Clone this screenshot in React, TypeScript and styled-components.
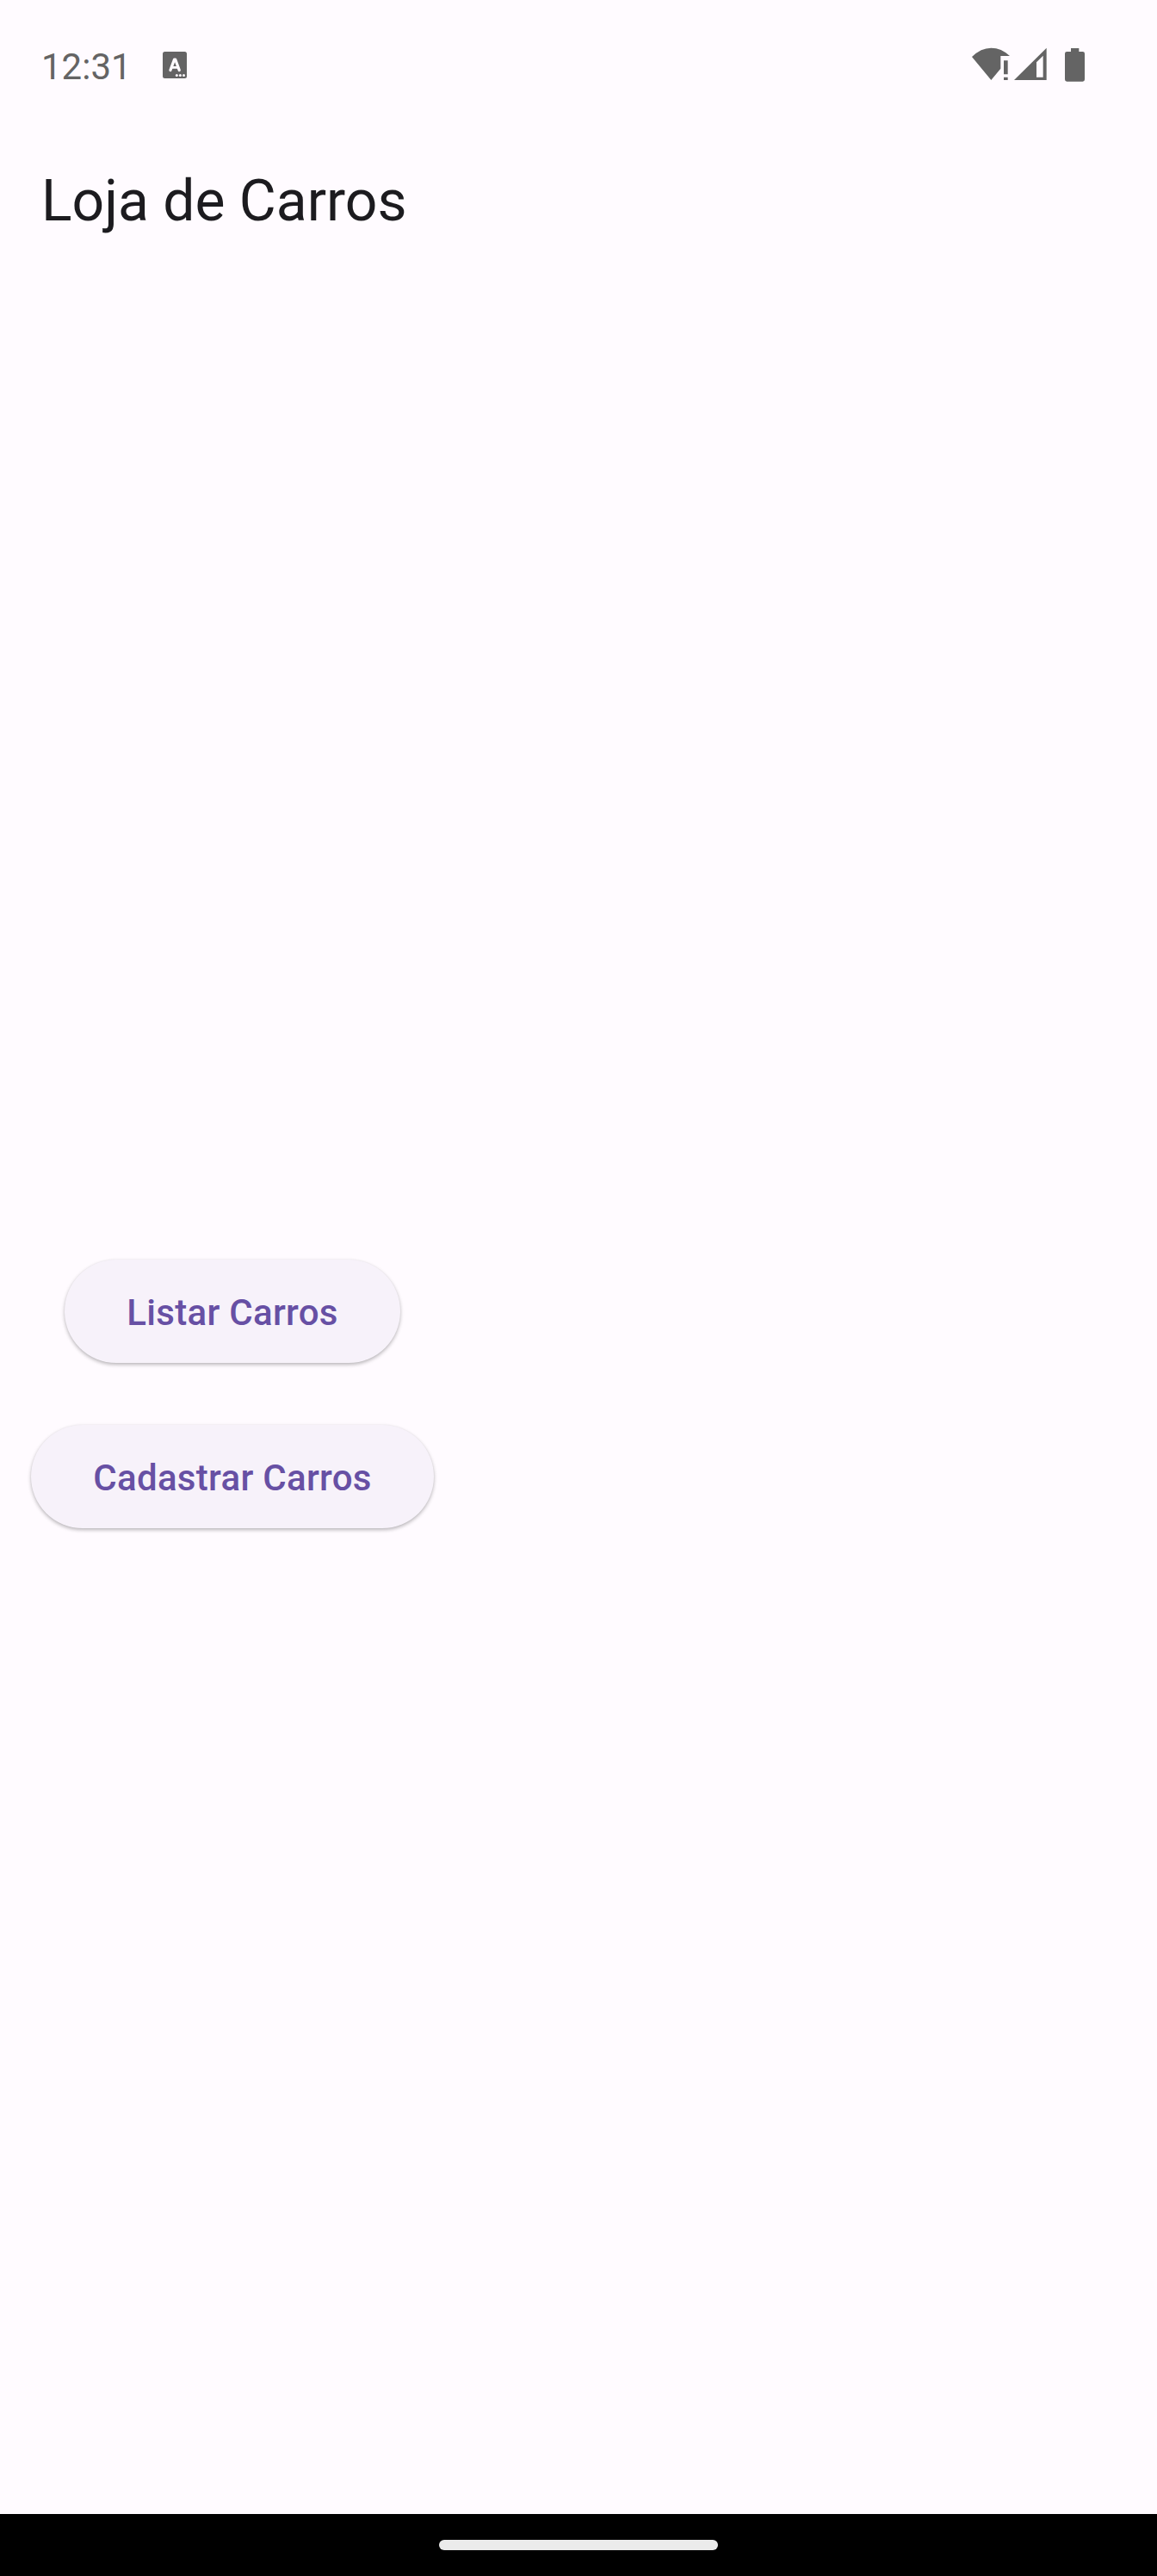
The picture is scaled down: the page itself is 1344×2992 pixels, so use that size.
import React from "react";
import styled, { createGlobalStyle } from "styled-components";

const GlobalStyle = createGlobalStyle`
  html, body { margin: 0; padding: 0; background: #fffbff; }
  *, *::before, *::after { box-sizing: border-box; }
`;

const Screen = styled.div`
  display: flex;
  flex-direction: column;
  width: 1344px;
  height: 2992px;
  background: #fffbff;
  font-family: Roboto, "Noto Sans", sans-serif;
  overflow: hidden;
`;

const StatusBar = styled.header`
  display: flex;
  align-items: flex-start;
  justify-content: space-between;
  height: 152px;
  padding: 53px 84px 0 48px;
  color: #646464;
`;

const StatusGroup = styled.div<{ $gap: number }>`
  display: flex;
  align-items: flex-start;
  gap: ${({ $gap }) => $gap}px;
`;

const Clock = styled.span`
  width: 105px;
  font-size: 42px;
  line-height: 50px;
  white-space: nowrap;
`;

const Glyph = styled.svg<{ $top: number }>`
  display: block;
  flex: none;
  margin-top: ${({ $top }) => $top}px;
  fill: currentColor;
`;

const AppBar = styled.div`
  display: flex;
  align-items: center;
  height: 160px;
  padding: 4px 48px 0;
`;

const Title = styled.h1`
  margin: 0;
  font-size: 66px;
  font-weight: 400;
  line-height: 84px;
  color: #1c1b1f;
  white-space: nowrap;
`;

const Body = styled.main`
  flex: 1;
  display: flex;
  flex-direction: column;
  justify-content: center;
  align-items: flex-start;
  padding: 6px 36px 0;
`;

const Actions = styled.div`
  display: flex;
  flex-direction: column;
  align-items: center;
  gap: 72px;
`;

const ElevatedButton = styled.button<{ $width: number }>`
  display: flex;
  align-items: center;
  justify-content: center;
  width: ${({ $width }) => $width}px;
  height: 120px;
  padding: 3px 0 0;
  border: 0;
  border-radius: 60px;
  background: #f7f2fa;
  color: #6750a4;
  font: 500 42px/60px Roboto, "Noto Sans", sans-serif;
  letter-spacing: 0.3px;
  white-space: nowrap;
  box-shadow: 0 2px 4px rgba(0, 0, 0, 0.28), 0 0 2px rgba(0, 0, 0, 0.04);
`;

const NavigationBar = styled.footer`
  display: flex;
  align-items: center;
  justify-content: center;
  height: 72px;
  background: #000;
`;

const Handle = styled.div`
  width: 324px;
  height: 12px;
  border-radius: 6px;
  background: #ebebeb;
`;

const KeyboardIcon = () => (
  <Glyph $top={7} width="28" height="31" viewBox="0 0 28 31">
    <rect width="28" height="31" rx="2.5" />
    <g fill="none" stroke="#fffbff" strokeLinecap="round" strokeLinejoin="round">
      <path d="M8.9 21.6 13.5 9.1H14.7L19.3 21.6" strokeWidth="3.2" />
      <path d="M10.6 18.4H17.6" strokeWidth="2.6" />
    </g>
    <g fill="#fffbff">
      <circle cx="16.3" cy="27.4" r="1.5" />
      <circle cx="20.4" cy="27.4" r="1.5" />
      <circle cx="24.5" cy="27.4" r="1.5" />
    </g>
  </Glyph>
);

const WifiIcon = () => (
  <Glyph $top={2} width="44" height="38" viewBox="57 45 132 114">
    <path d="M57 78Q88 47 124 47Q160 47 189 75H157V119L124 159Z" />
    <path d="M168 91H182V139H168ZM168 149H182V159H168Z" />
  </Glyph>
);

const SignalIcon = () => (
  <Glyph $top={2} width="38" height="38" viewBox="204 45 114 114">
    <path fillRule="evenodd" d="M204 159 317 47V159ZM282 97V149H305V74Z" />
  </Glyph>
);

const BatteryIcon = () => (
  <Glyph $top={3} width="23" height="39" viewBox="381 48 69 117">
    <path d="M402 48H430V60H443Q450 60 450 67V157Q450 164 443 164H388Q381 164 381 157V67Q381 60 388 60H402Z" />
  </Glyph>
);

const actions = [
  { label: "Listar Carros", width: 390 },
  { label: "Cadastrar Carros", width: 468 },
];

export default function App() {
  return (
    <Screen>
      <GlobalStyle />
      <StatusBar>
        <StatusGroup $gap={36}>
          <Clock>12:31</Clock>
          <KeyboardIcon />
        </StatusGroup>
        <StatusGroup $gap={21}>
          <StatusGroup $gap={5}>
            <WifiIcon />
            <SignalIcon />
          </StatusGroup>
          <BatteryIcon />
        </StatusGroup>
      </StatusBar>
      <AppBar>
        <Title>Loja de Carros</Title>
      </AppBar>
      <Body>
        <Actions>
          {actions.map(({ label, width }) => (
            <ElevatedButton key={label} $width={width}>
              {label}
            </ElevatedButton>
          ))}
        </Actions>
      </Body>
      <NavigationBar>
        <Handle />
      </NavigationBar>
    </Screen>
  );
}
